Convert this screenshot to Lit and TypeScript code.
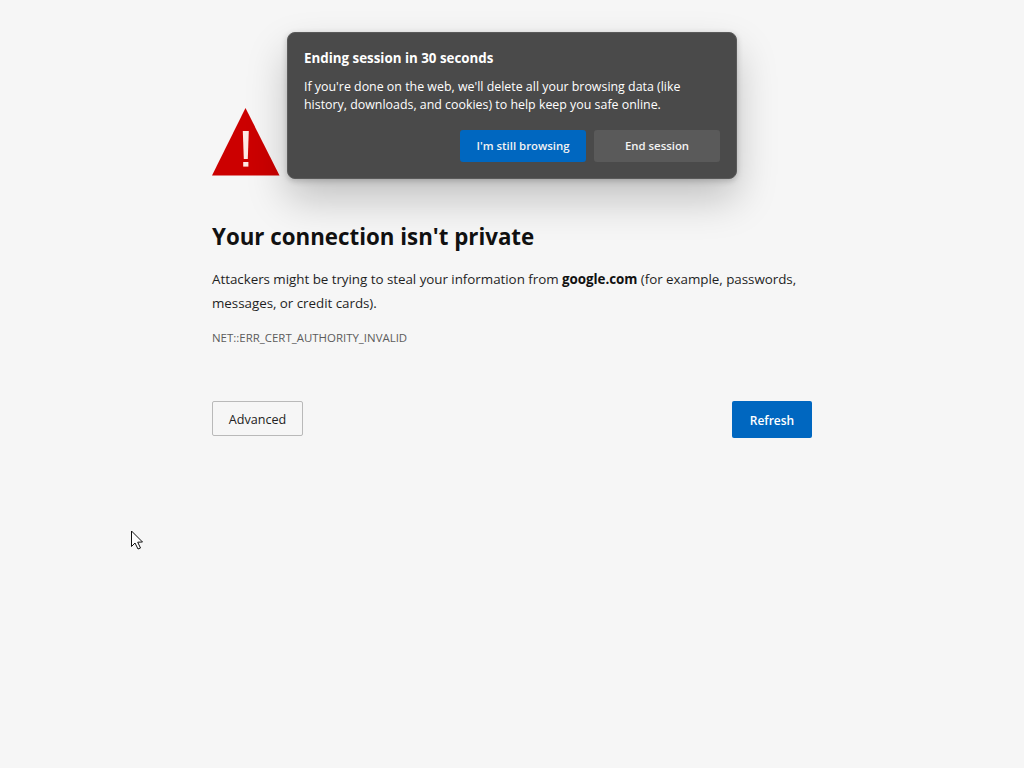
import { LitElement, html, css } from "lit";
import { customElement } from "lit/decorators.js";

@customElement("app-root")
export class AppRoot extends LitElement {
  static styles = css`
    :host { display: block; height: 768px; background: #f6f6f6; position: relative; overflow: hidden;
      font-family: "Open Sans", "Noto Sans", sans-serif; color: #1a1a1a; }
    .main { width: 600px; margin: 0 auto; padding-top: 108px; box-sizing: border-box; }
    .icon { display: block; width: 68px; height: 68px; }
    h1 { margin: 44px 0 0; font-size: 22.3px; line-height: 34px; font-weight: 700; color: #111; }
    .desc { margin: 13px 0 0; font-size: 13.4px; line-height: 24px; color: #1f1f1f; letter-spacing: -0.04px; }
    .desc b { font-weight: 700; color: #111; }
    .code { margin: 15px 0 0; font-size: 11.45px; line-height: 16px; color: #5c5c5c; }
    .actions { display: flex; justify-content: space-between; align-items: flex-start; margin-top: 55px; }
    button { font-family: inherit; cursor: pointer; box-sizing: border-box; }
    .adv { width: 91px; height: 35px; background: #f6f6f6; border: 1px solid #b9b9b9; border-radius: 2px; font-size: 12.6px; color: #222; padding: 2px 0 0; }
    .refresh { width: 80px; height: 37px; background: #0067c0; border: none; border-radius: 2px; color: #fff; font-size: 12px; font-weight: 600; padding: 2px 0 0; }
    .popup { position: absolute; left: 287px; top: 32px; width: 450px; height: 147px; box-sizing: border-box; padding: 16px;
      background: #4a4a4a; border: 1px solid #5a5a5a; border-radius: 8px; color: #fff;
      box-shadow: 0 20px 40px rgba(0,0,0,.22), 0 2px 6px rgba(0,0,0,.2); }
    .title { font-size: 13.35px; line-height: 20px; font-weight: 700; margin-top: -1px; }
    .body { margin-top: 10px; font-size: 12.4px; line-height: 18px; color: #fff; }
    .btns { display: flex; justify-content: flex-end; gap: 8px; margin-top: 16px; }
    .btns button { width: 126px; height: 32px; border: none; border-radius: 3px; color: #f2f2f2; font-size: 11.4px; font-weight: 600; padding: 0 0 2px; }
    .primary { background: #0067c0; }
    .secondary { background: #5a5a5a; }
    .cursor { position: absolute; left: 130px; top: 530px; width: 14px; height: 20px; }
  `;

  render() {
    return html`
      <div class="main">
        <svg class="icon" viewBox="0 0 68 68" aria-hidden="true">
          <path d="M33.5 0 L67.5 67.5 H0 Z" fill="#cc0000"></path>
          <path d="M30.8 23 H36.8 L35.8 51 H31.8 Z" fill="#fde8e4"></path>
          <rect x="31.2" y="54" width="5.2" height="4.6" fill="#fde8e4"></rect>
        </svg>
        <h1>Your connection isn't private</h1>
        <p class="desc">Attackers might be trying to steal your information from <b>google.com</b> (for example, passwords, messages, or credit cards).</p>
        <div class="code">NET::ERR_CERT_AUTHORITY_INVALID</div>
        <div class="actions">
          <button class="adv">Advanced</button>
          <button class="refresh">Refresh</button>
        </div>
      </div>
      <div class="popup">
        <div class="title">Ending session in 30 seconds</div>
        <div class="body">If you're done on the web, we'll delete all your browsing data (like history, downloads, and cookies) to help keep you safe online.</div>
        <div class="btns">
          <button class="primary">I'm still browsing</button>
          <button class="secondary">End session</button>
        </div>
      </div>
      <svg class="cursor" viewBox="0 0 14 20" aria-hidden="true">
        <path d="M1.5 1 V16.5 L5 13 L8 19 L10.5 18 L7.7 12.2 L12.5 12 Z" fill="#fff" stroke="#111" stroke-width="1"></path>
      </svg>
    `;
  }
}
